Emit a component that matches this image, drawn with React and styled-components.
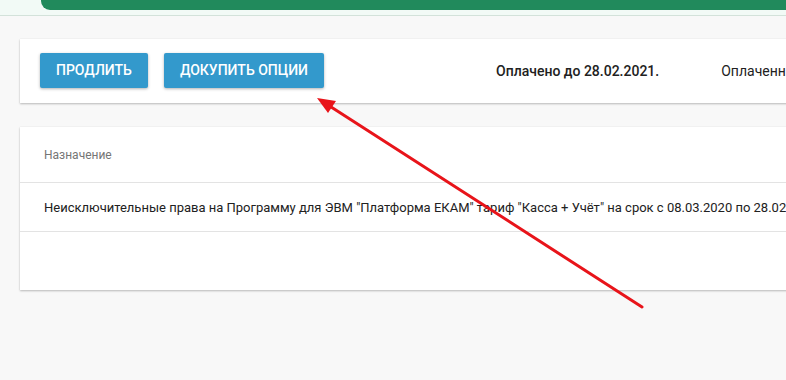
import React from 'react';
import styled, { createGlobalStyle } from 'styled-components';

const GlobalStyle = createGlobalStyle`
  html, body {
    margin: 0;
    padding: 0;
    background: #f8f8f8;
    font-family: Roboto, "Liberation Sans", sans-serif;
    overflow: hidden;
  }
`;

const Page = styled.div`
  position: relative;
  width: 786px;
  height: 380px;
  overflow: hidden;
`;

const TopStrip = styled.div`
  height: 15px;
  background: #f2faf6;
  border-bottom: 1px solid #d3e2da;
  padding-left: 41px;
`;

const GreenBar = styled.div`
  height: 10px;
  background: #218a5c;
  border-bottom-left-radius: 9px;
`;

const Content = styled.div`
  width: 1100px;
  padding: 23px 0 0 20px;
  display: flex;
  flex-direction: column;
  gap: 24px;
`;

const Card = styled.div`
  background: #fff;
  box-shadow: 0 1px 2px rgba(0, 0, 0, 0.25), 0 0 1px rgba(0, 0, 0, 0.08);
`;

const Toolbar = styled(Card)`
  height: 64px;
  padding: 0 20px;
  display: flex;
  align-items: center;
  gap: 16px;
`;

const Button = styled.button`
  height: 35px;
  padding: 0 16px;
  border: none;
  border-radius: 2px;
  background: #3399cc;
  color: #fff;
  font-family: Roboto, "Liberation Sans", sans-serif;
  font-size: 14px;
  font-weight: 500;
  text-transform: uppercase;
  box-shadow: 0 1px 3px rgba(0, 0, 0, 0.3);
  margin-top: -2px;
`;

const Status = styled.span`
  margin-left: ${p => p.$offset}px;
  font-size: 14px;
  font-weight: ${p => (p.$bold ? 500 : 400)};
  color: #212121;
  white-space: nowrap;
`;

const Table = styled(Card)`
  height: 163px;
`;

const HeadRow = styled.div`
  height: 55px;
  padding: 0 24px;
  display: flex;
  align-items: center;
  border-bottom: 1px solid #e3e3e3;
  font-size: 12px;
  color: #757575;
`;

const Row = styled.div`
  height: 48px;
  padding: 0 24px;
  display: flex;
  align-items: center;
  border-bottom: 1px solid #e3e3e3;
  font-size: 13px;
  color: #212121;
  white-space: nowrap;
`;

const Arrow = styled.svg`
  position: absolute;
  left: 0;
  top: 0;
  pointer-events: none;
`;

export default function App() {
  return (
    <Page>
      <GlobalStyle />
      <TopStrip>
        <GreenBar />
      </TopStrip>
      <Content>
        <Toolbar>
          <Button>Продлить</Button>
          <Button>Докупить опции</Button>
          <Status $offset={156} $bold>Оплачено до 28.02.2021.</Status>
          <Status $offset={46}>Оплаченные опции: нет</Status>
        </Toolbar>
        <Table>
          <HeadRow>Назначение</HeadRow>
          <Row>
            Неисключительные права на Программу для ЭВМ "Платформа ЕКАМ" тариф "Касса + Учёт" на срок с 08.03.2020 по 28.02.2021
          </Row>
        </Table>
      </Content>
      <Arrow width="786" height="380" viewBox="0 0 786 380">
        <line x1="642" y1="307" x2="328" y2="105" stroke="#e8141a" strokeWidth="3" strokeLinecap="round" />
        <polygon points="317,98 336,101 328,113" fill="#e8141a" />
      </Arrow>
    </Page>
  );
}
